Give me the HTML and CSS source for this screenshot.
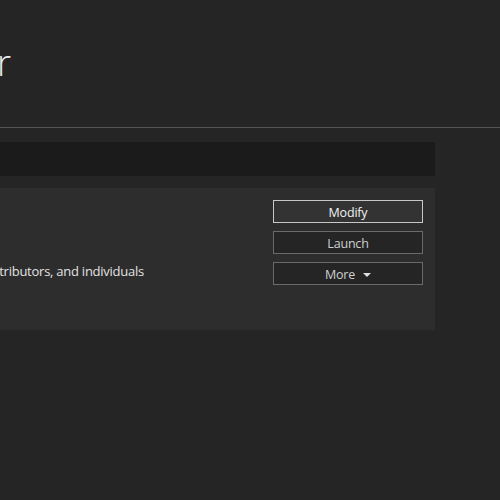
FILE: index.html
```html
<!DOCTYPE html>
<html>
<head>
<meta charset="utf-8">
<link rel="stylesheet" href="styles.css">
</head>
<body>
<div class="page">
  <header class="header">
    <div class="title-clip"><h1 class="title">Visual Studio Installer</h1></div>
  </header>
  <div class="content">
    <div class="tabbar"></div>
    <div class="card">
      <div class="info">
        <div class="desc-clip"><p class="desc">Powerful IDE, free for students, open-source contributors, and individuals</p></div>
      </div>
      <div class="actions">
        <button class="btn btn-primary">Modify</button>
        <button class="btn">Launch</button>
        <button class="btn">More <span class="caret"></span></button>
      </div>
    </div>
  </div>
</div>
</body>
</html>
```
FILE: styles.css
```css
html, body {
  margin: 0;
  padding: 0;
  background: #252526;
  overflow: hidden;
}
.page {
  width: 500px;
  height: 500px;
  font-family: "Open Sans", "Noto Sans", sans-serif;
  color: #e6e6e6;
}
.header {
  height: 127px;
  border-bottom: 1px solid #555556;
}
.title-clip {
  display: flex;
  justify-content: flex-end;
  width: 11px;
  padding-top: 45px;
}
.title {
  margin: 0;
  font-size: 36px;
  line-height: 36px;
  font-weight: 300;
  color: #ececec;
  white-space: nowrap;
  flex: none;
}
.content {
  width: 435px;
  padding-top: 14px;
  display: flex;
  flex-direction: column;
  gap: 12px;
}
.tabbar {
  height: 34px;
  background: #1b1b1b;
}
.card {
  height: 142px;
  background: #2d2d2d;
  display: flex;
  box-sizing: border-box;
  padding: 12px 12px 0 0;
}
.info {
  flex: 1;
}
.desc-clip {
  display: flex;
  justify-content: flex-end;
  width: 144px;
  margin-top: 62px;
}
.desc {
  margin: 0;
  flex: none;
  white-space: nowrap;
  font-size: 13px;
  letter-spacing: -0.25px;
  line-height: 19px;
  color: #e2e2e2;
}
.actions {
  width: 150px;
  display: flex;
  flex-direction: column;
  gap: 8px;
}
.btn {
  height: 23px;
  box-sizing: border-box;
  border: 1px solid #6a6a6a;
  background: #252526;
  color: #d0d0d0;
  font-family: "Open Sans", "Noto Sans", sans-serif;
  font-size: 12.5px;
  letter-spacing: -0.2px;
  padding: 2px 0 0;
  display: flex;
  align-items: center;
  justify-content: center;
  gap: 8px;
}
.btn-primary {
  border-color: #c8c8c8;
  background: #333334;
  color: #f2f2f2;
}
.caret {
  width: 0;
  height: 0;
  border-left: 4px solid transparent;
  border-right: 4px solid transparent;
  border-top: 4px solid #e0e0e0;
}
```
